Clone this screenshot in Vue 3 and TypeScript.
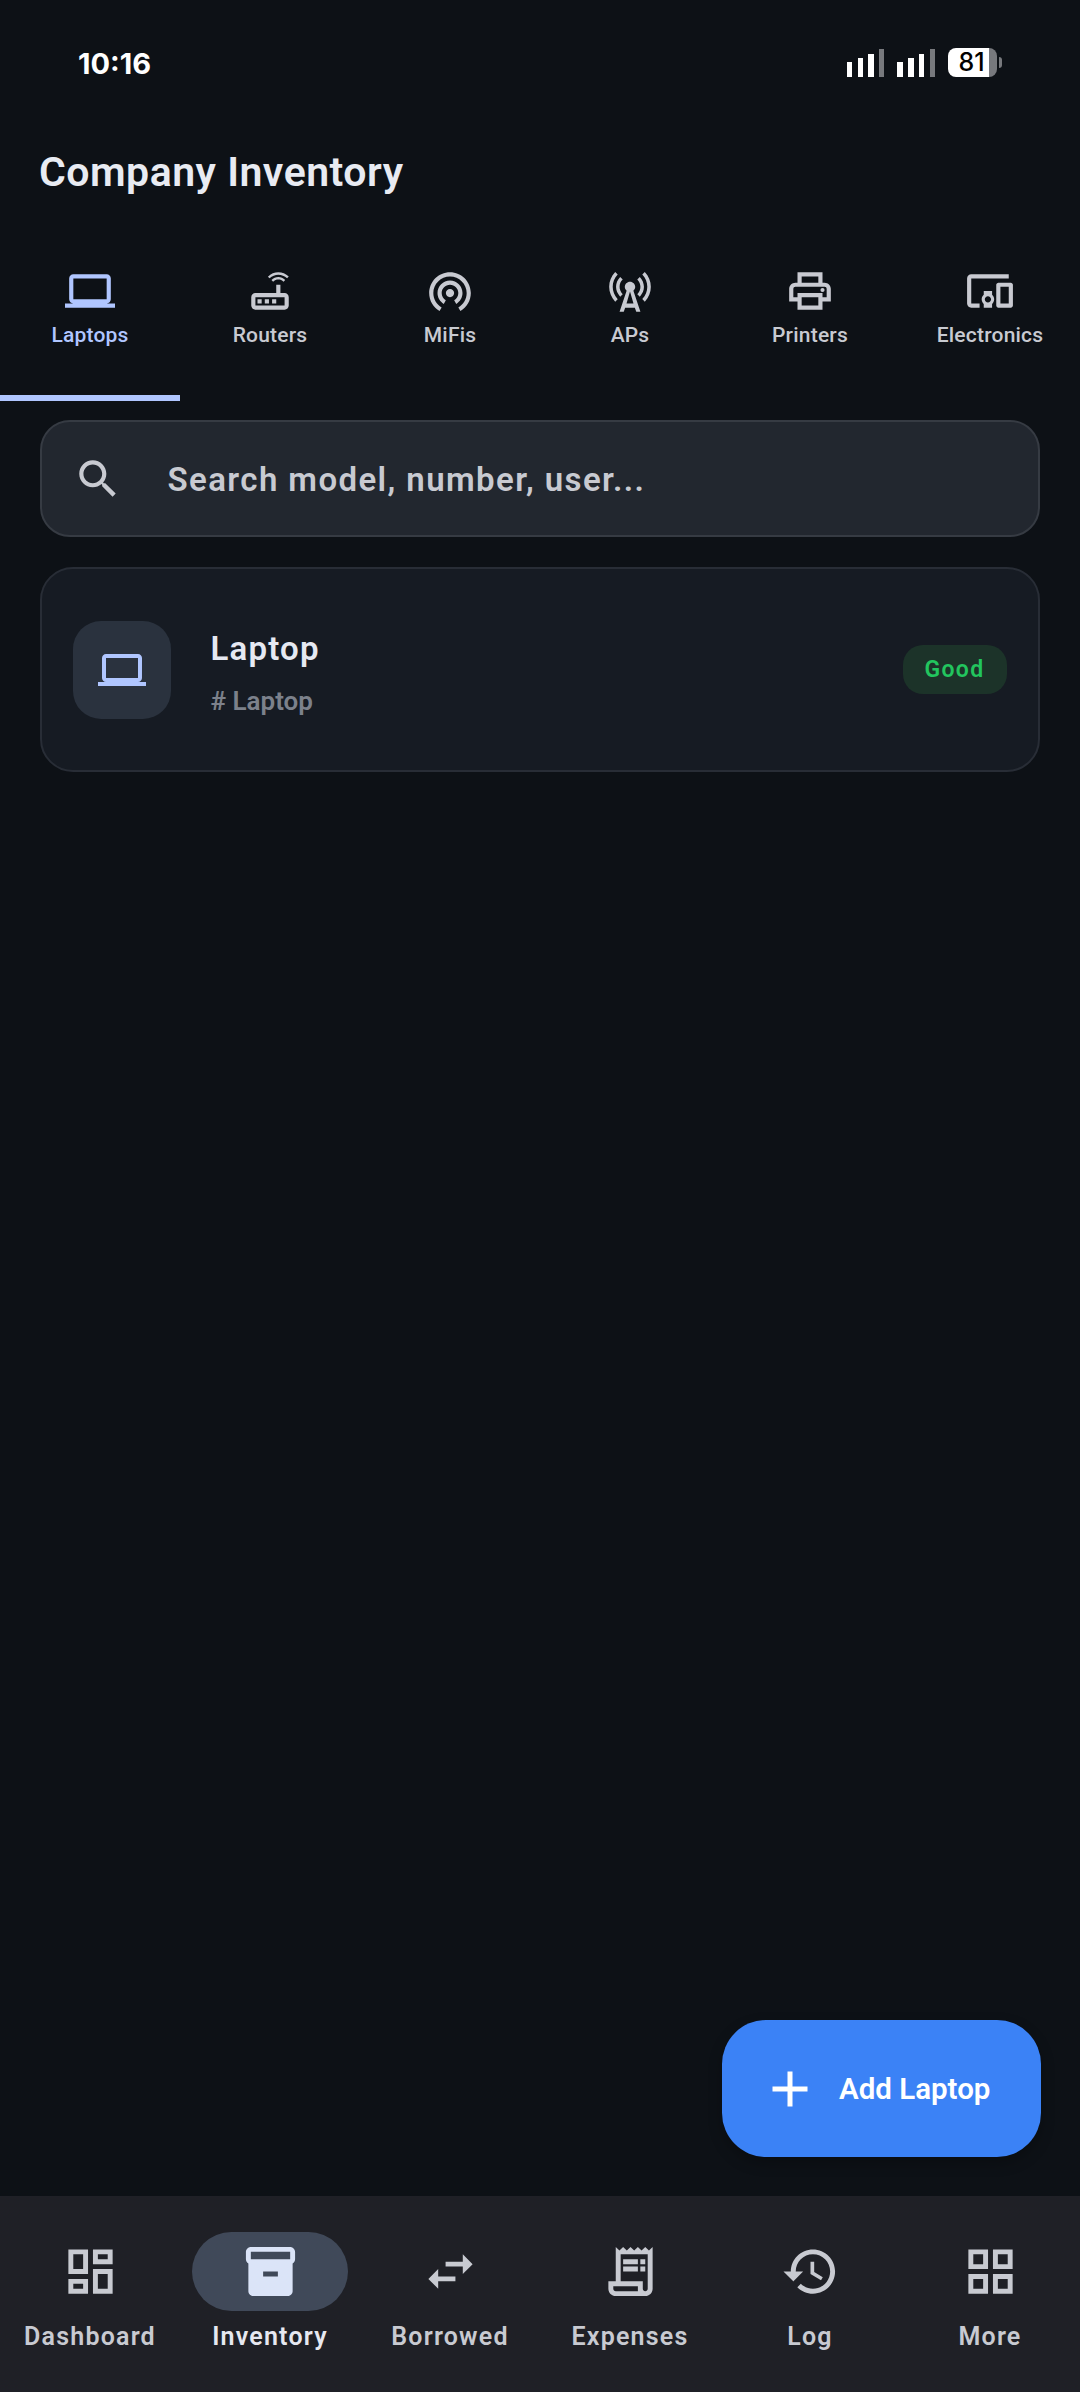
<script setup lang="ts">
interface NavEntry {
  label: string
  d: string
}

const laptop =
  'M20 18c1.1 0 1.99-.9 1.99-2L22 6c0-1.1-.9-2-2-2H4c-1.1 0-2 .9-2 2v10c0 1.1.9 2 2 2H0v2h24v-2h-4zM4 6h16v10H4V6z'

const tabs: NavEntry[] = [
  { label: 'Laptops', d: laptop },
  {
    label: 'Routers',
    d: 'M16 4.2c1.5 0 3 .6 4.2 1.7l.8-.8C19.6 3.7 17.8 3 16 3s-3.6.7-5 2.1l.8.8C13 4.8 14.5 4.2 16 4.2zm-3.3 2.5.8.8c.7-.7 1.6-1 2.5-1s1.8.3 2.5 1l.8-.8c-.9-.9-2.1-1.4-3.3-1.4s-2.4.5-3.3 1.4zM19 13h-2V9h-2v4H5c-1.1 0-2 .9-2 2v4c0 1.1.9 2 2 2h14c1.1 0 2-.9 2-2v-4c0-1.1-.9-2-2-2zm0 6H5v-4h14v4zM6 16h2v2H6zm3.5 0h2v2h-2zm3.5 0h2v2h-2z',
  },
  {
    label: 'MiFis',
    d: 'M12 11c-1.1 0-2 .9-2 2s.9 2 2 2 2-.9 2-2-.9-2-2-2zm6 2c0-3.31-2.69-6-6-6s-6 2.69-6 6c0 2.22 1.21 4.15 3 5.19l1-1.74c-1.19-.7-2-1.97-2-3.45 0-2.21 1.79-4 4-4s4 1.79 4 4c0 1.48-.81 2.75-2 3.45l1 1.74c1.79-1.04 3-2.97 3-5.19zM12 3C6.48 3 2 7.48 2 13c0 3.7 2.01 6.92 4.99 8.65l1-1.73C5.61 18.53 4 15.96 4 13c0-4.42 3.58-8 8-8s8 3.58 8 8c0 2.96-1.61 5.53-4 6.92l1 1.73c2.99-1.73 5-4.95 5-8.65 0-5.52-4.48-10-10-10z',
  },
  {
    label: 'APs',
    d: 'M7.3 14.7l1.2-1.2c-1-1-1.5-2.3-1.5-3.5 0-1.3.5-2.6 1.5-3.5L7.3 5.3c-1.3 1.3-2 3-2 4.7s.7 3.4 2 4.7zM19.1 2.9l-1.2 1.2c1.6 1.6 2.4 3.8 2.4 5.9 0 2.1-.8 4.3-2.4 5.9l1.2 1.2c2-2 2.9-4.5 2.9-7.1 0-2.6-1-5.1-2.9-7.1zM6.1 4.1L4.9 2.9C3 4.9 2 7.4 2 10c0 2.6 1 5.1 2.9 7.1l1.2-1.2c-1.6-1.6-2.4-3.8-2.4-5.9 0-2.1.8-4.3 2.4-5.9zM16.7 14.7c1.3-1.3 2-3 2-4.7-.1-1.7-.7-3.4-2-4.7l-1.2 1.2c1 1 1.5 2.3 1.5 3.5 0 1.3-.5 2.6-1.5 3.5l1.2 1.2zM14.5 10c0-1.38-1.12-2.5-2.5-2.5S9.5 8.62 9.5 10c0 .76.34 1.42.87 1.88L7 22h2l.67-2h4.67l.66 2h2l-3.37-10.12c.53-.46.87-1.12.87-1.88zm-4.17 8L12 12.2l1.67 5.8h-3.34z',
  },
  {
    label: 'Printers',
    d: 'M19 8h-1V3H6v5H5c-1.66 0-3 1.34-3 3v6h4v4h12v-4h4v-6c0-1.66-1.34-3-3-3zM8 5h8v3H8V5zm8 12v2H8v-4h8v2zm2-2v-2H6v2H4v-4c0-.55.45-1 1-1h14c.55 0 1 .45 1 1v4h-2zM18 10.5a1 1 0 1 0 0 2 1 1 0 0 0 0-2z',
  },
  {
    label: 'Electronics',
    d: 'M3 6h18V4H3c-1.1 0-2 .9-2 2v12c0 1.1.9 2 2 2h4v-2H3V6zm10 6H9v1.78c-.61.55-1 1.33-1 2.22s.39 1.67 1 2.22V20h4v-1.78c.61-.55 1-1.34 1-2.22s-.39-1.67-1-2.22V12zm-2 5.5c-.83 0-1.5-.67-1.5-1.5s.67-1.5 1.5-1.5 1.5.67 1.5 1.5-.67 1.5-1.5 1.5zM22 8h-6c-.5 0-1 .5-1 1v10c0 .5.5 1 1 1h6c.5 0 1-.5 1-1V9c0-.5-.5-1-1-1zm-1 10h-4v-8h4v8z',
  },
]

const navItems: NavEntry[] = [
  {
    label: 'Dashboard',
    d: 'M19 5v2h-4V5h4M9 5v6H5V5h4m10 8v6h-4v-6h4M9 17v2H5v-2h4M21 3h-8v6h8V3zM11 3H3v10h8V3zm10 8h-8v10h8V11zm-10 4H3v6h8v-6z',
  },
  {
    label: 'Inventory',
    d: 'M20 2H4c-1 0-2 .9-2 2v3.01c0 .72.43 1.34 1 1.69V20c0 1.1 1.1 2 2 2h14c.9 0 2-.9 2-2V8.7c.57-.35 1-.97 1-1.69V4c0-1.1-1-2-2-2zm-5 12H9v-2h6v2zm5-7H4V4l16-.02V7z',
  },
  {
    label: 'Borrowed',
    d: 'M6.99 11L3 15l3.99 4v-3H14v-2H6.99v-3zM21 9l-4-4v3h-7v2h7v3l4-4z',
  },
  {
    label: 'Expenses',
    d: 'M19.5 3.5 18 2l-1.5 1.5L15 2l-1.5 1.5L12 2l-1.5 1.5L9 2 7.5 3.5 6 2v14H3v3c0 1.66 1.34 3 3 3h12c1.66 0 3-1.34 3-3V2l-1.5 1.5zM15 20H6c-.55 0-1-.45-1-1v-1h10v2zm4-1c0 .55-.45 1-1 1s-1-.45-1-1v-3H8V5h11v14zM9 7h6v2H9zM16 7h2v2h-2zM9 10h6v2H9zM16 10h2v2h-2z',
  },
  {
    label: 'Log',
    d: 'M13 3c-4.97 0-9 4.03-9 9H1l3.89 3.89.07.14L9 12H6c0-3.87 3.13-7 7-7s7 3.13 7 7-3.13 7-7 7c-1.93 0-3.68-.79-4.94-2.06l-1.42 1.42C8.27 19.99 10.51 21 13 21c4.97 0 9-4.03 9-9s-4.03-9-9-9zm-1 5v5l4.28 2.54.72-1.21-3.5-2.08V8H12z',
  },
  {
    label: 'More',
    d: 'M3 3v8h8V3H3zm6 6H5V5h4v4zm-6 4v8h8v-8H3zm6 6H5v-4h4v4zm4-16v8h8V3h-8zm6 6h-4V5h4v4zm-6 4v8h8v-8h-8zm6 6h-4v-4h4v4z',
  },
]

const signalBars = [14.7, 18.7, 23.3, 28.3]
</script>

<template>
  <div class="screen">
    <header class="status">
      <span class="status__time">10:16</span>
      <div class="status__right">
        <div v-for="group in 2" :key="group" class="signal">
          <i
            v-for="(h, i) in signalBars"
            :key="i"
            class="signal__bar"
            :class="{ 'signal__bar--off': i === 3 }"
            :style="{ height: h + 'px' }"
          />
        </div>
        <div class="battery">
          <div class="battery__body"><span>81</span></div>
          <i class="battery__tip" />
        </div>
      </div>
    </header>

    <h1 class="title">Company Inventory</h1>

    <nav class="tabs">
      <div
        v-for="(tab, i) in tabs"
        :key="tab.label"
        class="tab"
        :class="{ 'tab--active': i === 0 }"
      >
        <svg class="tab__icon" viewBox="0 0 24 24" fill="currentColor" aria-hidden="true">
          <path :d="tab.d" />
        </svg>
        <span class="tab__label">{{ tab.label }}</span>
      </div>
    </nav>

    <main class="content">
      <div class="search">
        <svg class="search__icon" viewBox="0 0 24 24" fill="currentColor" aria-hidden="true">
          <path d="M15.5 14h-.79l-.28-.27C15.41 12.59 16 11.11 16 9.5 16 5.91 13.09 3 9.5 3S3 5.91 3 9.5 5.91 16 9.5 16c1.61 0 3.09-.59 4.23-1.57l.27.28v.79l5 4.99L20.49 19l-4.99-5zm-6 0C7.01 14 5 11.99 5 9.5S7.01 5 9.5 5 14 7.01 14 9.5 11.99 14 9.5 14z" />
        </svg>
        <span class="search__text">Search model, number, user...</span>
      </div>

      <article class="card">
        <div class="card__thumb">
          <svg viewBox="0 0 24 24" fill="currentColor" aria-hidden="true">
            <path :d="laptop" />
          </svg>
        </div>
        <div class="card__body">
          <div class="card__name">Laptop</div>
          <div class="card__number"># Laptop</div>
        </div>
        <span class="badge">Good</span>
      </article>

      <button type="button" class="fab">
        <svg class="fab__icon" viewBox="0 0 24 24" fill="currentColor" aria-hidden="true">
          <path d="M19 13h-6v6h-2v-6H5v-2h6V5h2v6h6v2z" />
        </svg>
        <span>Add Laptop</span>
      </button>
    </main>

    <footer class="nav">
      <div
        v-for="(item, i) in navItems"
        :key="item.label"
        class="nav__item"
        :class="{ 'nav__item--active': i === 1 }"
      >
        <div class="nav__pill">
          <svg viewBox="0 0 24 24" fill="currentColor" aria-hidden="true">
            <path :d="item.d" />
          </svg>
        </div>
        <span class="nav__label">{{ item.label }}</span>
      </div>
    </footer>
  </div>
</template>

<style>
html,
body {
  margin: 0;
  background: #0d1116;
}
</style>

<style scoped>
.screen {
  width: 1080px;
  height: 2392px;
  display: flex;
  flex-direction: column;
  overflow: hidden;
  background: #0d1116;
  font-family: Roboto, "Liberation Sans", sans-serif;
}

.status {
  height: 148px;
  box-sizing: border-box;
  padding: 44px 78px 0 78px;
  display: flex;
  justify-content: space-between;
  align-items: flex-start;
  flex-shrink: 0;
}

.status__time {
  font-family: Inter, Roboto, sans-serif;
  font-size: 29px;
  line-height: 40px;
  font-weight: 700;
  color: #fff;
}

.status__right {
  display: flex;
  align-items: flex-end;
  margin-top: 4px;
  height: 29px;
}

.signal {
  display: flex;
  align-items: flex-end;
  gap: 5.2px;
  margin-right: 13px;
}

.signal__bar {
  display: block;
  width: 5.5px;
  background: #fff;
}

.signal__bar--off {
  background: #77797d;
}

.battery {
  display: flex;
  align-items: center;
}

.battery__body {
  width: 49px;
  height: 29px;
  border-radius: 8px;
  display: flex;
  align-items: center;
  justify-content: center;
  background: linear-gradient(90deg, #fff 84%, #77797d 84%);
}

.battery__body span {
  font-family: Inter, Roboto, sans-serif;
  font-size: 25px;
  line-height: 29px;
  font-weight: 500;
  color: #000;
  margin-right: 2px;
}

.battery__tip {
  display: block;
  width: 3px;
  height: 11px;
  margin-left: 2px;
  background: #77797d;
  border-radius: 0 3px 3px 0;
}

.title {
  margin: 0;
  padding-left: 39px;
  height: 50px;
  font-size: 41px;
  line-height: 49px;
  font-weight: 600;
  letter-spacing: 0.5px;
  color: #e8ebf2;
  flex-shrink: 0;
}

.tabs {
  display: grid;
  grid-template-columns: repeat(6, 180px);
  height: 203px;
  flex-shrink: 0;
}

.tab {
  display: flex;
  flex-direction: column;
  align-items: center;
  box-sizing: border-box;
  padding-top: 68px;
  color: #c8cad1;
}

.tab--active {
  color: #b0c6ff;
  border-bottom: 6px solid #b0c6ff;
}

.tab__icon {
  width: 50px;
  height: 50px;
}

.tab__label {
  margin-top: 4.5px;
  font-size: 21px;
  line-height: 28px;
  font-weight: 500;
  letter-spacing: 0.2px;
  white-space: nowrap;
}

.content {
  position: relative;
  flex: 1;
  padding: 19px 40px 0;
  display: flex;
  flex-direction: column;
  gap: 30px;
}

.search {
  height: 117px;
  box-sizing: border-box;
  display: flex;
  align-items: center;
  padding-left: 30.5px;
  border: 2.5px solid #363b43;
  border-radius: 30px;
  background: #22272f;
  color: #c8cad1;
}

.search__icon {
  width: 50px;
  height: 50px;
  flex-shrink: 0;
}

.search__text {
  margin-left: 45px;
  padding-top: 2px;
  font-size: 33px;
  line-height: 40px;
  font-weight: 600;
  letter-spacing: 1.4px;
}

.card {
  height: 205px;
  box-sizing: border-box;
  display: flex;
  align-items: center;
  padding: 0 31.5px 0 30.5px;
  border: 2.5px solid #282d36;
  border-radius: 33px;
  background: #161b23;
}

.card__thumb {
  width: 98px;
  height: 98px;
  border-radius: 28px;
  display: flex;
  align-items: center;
  justify-content: center;
  background: #2a323e;
  color: #b0c6ff;
  flex-shrink: 0;
}

.card__thumb svg {
  width: 48px;
  height: 48px;
}

.card__body {
  flex: 1;
  margin-left: 40px;
  padding-top: 7px;
}

.card__name {
  font-size: 33px;
  line-height: 44px;
  font-weight: 600;
  letter-spacing: 1.2px;
  color: #e6e9f2;
}

.card__number {
  margin-top: 11.5px;
  font-size: 26px;
  line-height: 36px;
  font-weight: 600;
  color: #7c818b;
}

.badge {
  width: 104px;
  height: 49px;
  border-radius: 20px;
  display: flex;
  align-items: center;
  justify-content: center;
  background: #1c3329;
  color: #22c55e;
  font-size: 23px;
  font-weight: 600;
  letter-spacing: 1.3px;
}

.fab {
  position: absolute;
  right: 39px;
  bottom: 39px;
  width: 319px;
  height: 137px;
  box-sizing: border-box;
  padding: 0 0 0 38px;
  display: flex;
  align-items: center;
  border: none;
  border-radius: 44px;
  background: #3b82f6;
  color: #fff;
  font-family: inherit;
  font-size: 29.5px;
  font-weight: 600;
  box-shadow: 0 6px 14px rgba(0, 0, 0, 0.25);
}

.fab__icon {
  width: 60px;
  height: 60px;
  margin-right: 19px;
  flex-shrink: 0;
}

.nav {
  height: 196px;
  display: grid;
  grid-template-columns: repeat(6, 180px);
  background: #1f2026;
  flex-shrink: 0;
}

.nav__item {
  display: flex;
  flex-direction: column;
  align-items: center;
  padding-top: 36px;
  color: #c8cad1;
}

.nav__pill {
  width: 156px;
  height: 79px;
  border-radius: 40px;
  display: flex;
  align-items: center;
  justify-content: center;
}

.nav__pill svg {
  width: 59px;
  height: 59px;
}

.nav__item--active .nav__pill {
  background: #404959;
  color: #dbe4f8;
}

.nav__label {
  margin-top: 9.5px;
  font-size: 25px;
  line-height: 32px;
  font-weight: 600;
  letter-spacing: 1.2px;
  white-space: nowrap;
}

.nav__item--active .nav__label {
  color: #e6e8f0;
}
</style>
